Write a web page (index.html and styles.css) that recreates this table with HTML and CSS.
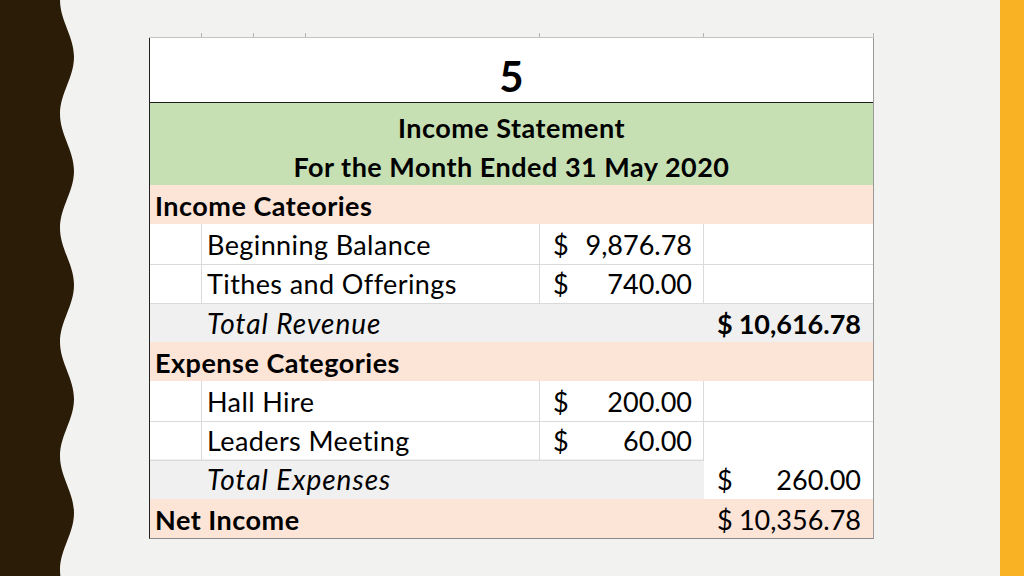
FILE: index.html
```html
<!DOCTYPE html>
<html lang="en">
<head>
<meta charset="utf-8">
<title>Income Statement</title>
<link rel="stylesheet" href="styles.css">
</head>
<body>
<div class="slide">
  <svg class="wave" width="75" height="576" viewBox="0 0 75 576" aria-hidden="true">
    <path d="M0 0 H60 C60 21 74 36 74 57 C74 78 60 93 60 114 C60 135 74 150 74 171 C74 192 60 207 60 228 C60 249 74 264 74 285 C74 306 60 321 60 342 C60 363 74 378 74 399 C74 420 60 435 60 456 C60 477 74 492 74 513 C74 534 60 549 60 570 C60 591 74 606 74 627 H0 Z"/>
  </svg>
  <main class="content">
    <div class="ruler"><span></span><span></span><span></span><span></span><span></span><span></span></div>
    <div class="sheet">
      <div class="title">5</div>
      <div class="banner">
        <div>Income Statement</div>
        <div>For the Month Ended 31 May 2020</div>
      </div>
      <div class="row section"><span class="cat">Income Cateories</span></div>
      <div class="row item">
        <span class="c"></span>
        <span class="c label">Beginning Balance</span>
        <span class="c amt"><span>$</span><span>9,876.78</span></span>
        <span class="c"></span>
      </div>
      <div class="row item">
        <span class="c"></span>
        <span class="c label">Tithes and Offerings</span>
        <span class="c amt"><span>$</span><span>740.00</span></span>
        <span class="c"></span>
      </div>
      <div class="row total">
        <span class="c"></span>
        <span class="c label">Total Revenue</span>
        <span class="c"></span>
        <span class="c amt amt-d strong"><span>$</span><span>10,616.78</span></span>
      </div>
      <div class="row section"><span class="cat">Expense Categories</span></div>
      <div class="row item">
        <span class="c"></span>
        <span class="c label">Hall Hire</span>
        <span class="c amt"><span>$</span><span>200.00</span></span>
        <span class="c"></span>
      </div>
      <div class="row item">
        <span class="c"></span>
        <span class="c label">Leaders Meeting</span>
        <span class="c amt"><span>$</span><span>60.00</span></span>
        <span class="c"></span>
      </div>
      <div class="row total">
        <span class="c"></span>
        <span class="c label">Total Expenses</span>
        <span class="c"></span>
        <span class="c amt amt-d white"><span>$</span><span>260.00</span></span>
      </div>
      <div class="row section net">
        <span class="cat">Net Income</span>
        <span class="c amt amt-d"><span>$</span><span>10,356.78</span></span>
      </div>
    </div>
  </main>
  <div class="accent"></div>
</div>
</body>
</html>
```

FILE: styles.css
```css
html, body {
  margin: 0;
  padding: 0;
}

body {
  font-family: Lato, "Liberation Sans", sans-serif;
  color: #000;
}

.slide {
  display: flex;
  width: 1024px;
  height: 576px;
  background: #f2f2f0;
  overflow: hidden;
}

.wave {
  flex: none;
  display: block;
  width: 75px;
  height: 576px;
}

.wave path {
  fill: #2a1c06;
}

.content {
  flex: 1;
  padding: 33px 0 0 74px;
}

.accent {
  flex: none;
  width: 24px;
  background: #f8b224;
}

.ruler {
  display: grid;
  grid-template-columns: 53px 52px 52px 234px 164px 170px;
  width: 725px;
  height: 5px;
  box-sizing: border-box;
  border-bottom: 1px solid #c4c4c4;
}

.ruler span {
  border-right: 1px solid #b4b4b4;
}

.sheet {
  width: 725px;
  box-sizing: border-box;
  background: #fff;
  border-left: 1px solid #222;
  border-right: 1px solid #9b9b9b;
  border-bottom: 1px solid #8a8a8a;
}

.title {
  height: 65px;
  box-sizing: border-box;
  padding-top: 17px;
  border-bottom: 1px solid #1e1e1e;
  text-align: center;
  font-weight: 700;
  font-size: 42px;
  line-height: 42px;
}

.banner {
  height: 82px;
  box-sizing: border-box;
  padding-top: 5px;
  background: #c6e0b4;
  text-align: center;
  font-weight: 700;
  font-size: 27px;
  line-height: 39px;
  letter-spacing: 0.5px;
}

.row {
  display: grid;
  grid-template-columns: 52px 338px 164px 169px;
  height: 39.2px;
  font-size: 27px;
  line-height: 39px;
}

.row > * {
  box-sizing: border-box;
  padding-top: 1px;
  white-space: nowrap;
}

.section {
  background: #fce4d6;
}

.section .cat {
  grid-column: 1 / -1;
  padding-left: 5px;
  font-weight: 700;
  letter-spacing: 0.5px;
}

.net .cat {
  grid-column: 1 / 4;
}

.item {
  background: #fff;
}

.item > * {
  border-bottom: 1px solid #dadada;
}

.item > :not(:last-child) {
  border-right: 1px solid #dadada;
}

.label {
  padding-left: 5px;
  letter-spacing: 0.4px;
}

.total {
  background: #f0f0f0;
}

.total .label {
  font-style: italic;
  font-size: 28px;
  letter-spacing: 1px;
}

.amt {
  display: flex;
  justify-content: space-between;
  padding: 1px 11px 0 13px;
}

.amt-d {
  padding-right: 12px;
}

.strong {
  font-weight: 700;
}

.white {
  background: #fff;
}
```
